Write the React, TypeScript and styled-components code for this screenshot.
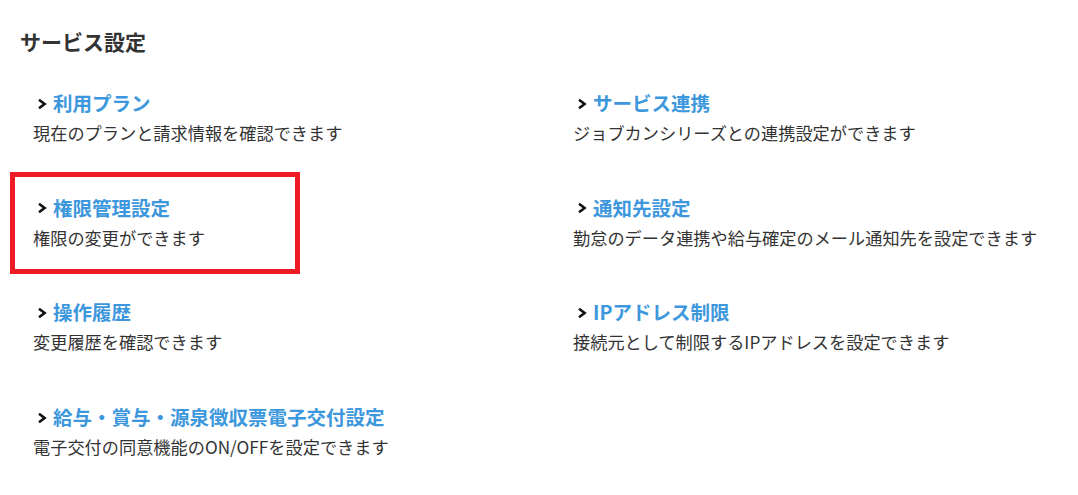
import styled, { createGlobalStyle } from "styled-components";

const GlobalStyle = createGlobalStyle`
	html, body {
		margin: 0;
		padding: 0;
		background: #fff;
	}
	body {
		font-family: "Noto Sans CJK JP", "Noto Sans", sans-serif;
		color: #333;
	}
`;

const Page = styled.div`
	padding: 26px 20px 0 20px;
`;

const Heading = styled.h2`
	margin: 0;
	font-size: 21px;
	line-height: 30px;
	font-weight: 700;
	color: #333;
`;

const MenuGrid = styled.div`
	margin-top: 32px;
	padding-left: 13px;
	display: grid;
	grid-template-columns: 540px 1fr;
	row-gap: 44.7px;
`;

const Item = styled.div<{ $highlight?: boolean }>`
	position: relative;
	height: 60px;
	${(p) =>
		p.$highlight &&
		`
		&::after {
			content: "";
			position: absolute;
			left: -23px;
			top: -21px;
			width: 290px;
			height: 102px;
			box-sizing: border-box;
			border: 5px solid #ed1c24;
			pointer-events: none;
		}
	`}
`;

const TitleRow = styled.a`
	display: flex;
	align-items: center;
	gap: 6px;
	padding-left: 4px;
	height: 30px;
	text-decoration: none;
	cursor: pointer;
`;

const Title = styled.span`
	font-size: 19.5px;
	line-height: 30px;
	font-weight: 700;
	color: #3d97dc;
	white-space: nowrap;
`;

const Description = styled.p`
	margin: 0;
	font-size: 17.2px;
	line-height: 30px;
	color: #333;
	white-space: nowrap;
`;

const Chevron = () => (
	<svg width="10" height="12" viewBox="0 0 10 12" style={{ flexShrink: 0, marginTop: 1 }}>
		<polyline
			points="2,1.8 7.6,6 2,10.2"
			fill="none"
			stroke="#111"
			strokeWidth="2.6"
		/>
	</svg>
);

const items = [
	{ title: "利用プラン", desc: "現在のプランと請求情報を確認できます" },
	{ title: "サービス連携", desc: "ジョブカンシリーズとの連携設定ができます" },
	{ title: "権限管理設定", desc: "権限の変更ができます", highlight: true },
	{ title: "通知先設定", desc: "勤怠のデータ連携や給与確定のメール通知先を設定できます" },
	{ title: "操作履歴", desc: "変更履歴を確認できます" },
	{ title: "IPアドレス制限", desc: "接続元として制限するIPアドレスを設定できます" },
	{ title: "給与・賞与・源泉徴収票電子交付設定", desc: "電子交付の同意機能のON/OFFを設定できます" },
];

const App = () => {
	return (
		<>
			<GlobalStyle />
			<Page>
				<Heading>サービス設定</Heading>
				<MenuGrid>
					{items.map((item) => (
						<Item key={item.title} $highlight={item.highlight}>
							<TitleRow>
								<Chevron />
								<Title>{item.title}</Title>
							</TitleRow>
							<Description>{item.desc}</Description>
						</Item>
					))}
				</MenuGrid>
			</Page>
		</>
	);
};

export default App;
